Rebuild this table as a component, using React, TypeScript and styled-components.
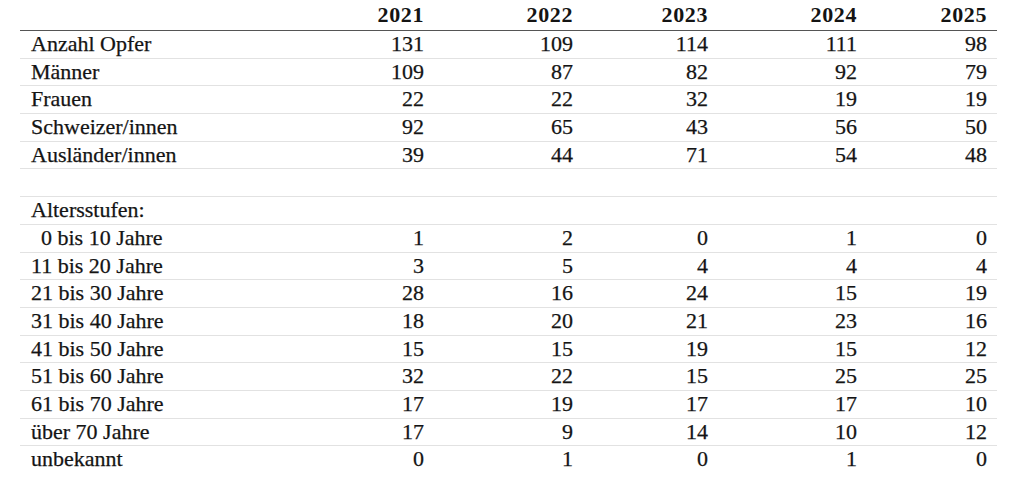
import React from "react";
import styled, { createGlobalStyle } from "styled-components";

const Global = createGlobalStyle`
  html, body { margin: 0; padding: 0; background: #fff; }
  body {
    font-family: "Liberation Serif", "Times New Roman", serif;
    color: #141414;
    -webkit-font-smoothing: antialiased;
  }
`;

const COLS = "265px 149px 149px 135px 149px 130px";

const Table = styled.div`
  margin-left: 20px;
  width: 977px;
  display: flex;
  flex-direction: column;
`;

const HeaderRow = styled.div`
  display: grid;
  grid-template-columns: ${COLS};
  height: 31px;
  box-sizing: border-box;
  border-bottom: 1.5px solid #555;
  align-items: end;
  font-weight: 700;
  font-size: 22px;
  line-height: 22px;
  letter-spacing: 0.6px;
  padding-bottom: 4px;
`;

const Row = styled.div<{ $last?: boolean }>`
  display: grid;
  grid-template-columns: ${COLS};
  height: 27.7px;
  box-sizing: border-box;
  border-bottom: ${(p) => (p.$last ? "none" : "1px solid #e2e2e2")};
  font-size: 22px;
  line-height: 26px;
  -webkit-text-stroke: 0.25px #141414;
`;

const Label = styled.div<{ $indent?: boolean }>`
  padding-left: ${(p) => (p.$indent ? "21px" : "11px")};
  white-space: nowrap;
`;

const Num = styled.div`
  text-align: right;
  padding-right: 10px;
`;

const years = ["2021", "2022", "2023", "2024", "2025"];

type R = { label: string; vals?: number[]; indent?: boolean };

const rows: R[] = [
  { label: "Anzahl Opfer", vals: [131, 109, 114, 111, 98] },
  { label: "Männer", vals: [109, 87, 82, 92, 79] },
  { label: "Frauen", vals: [22, 22, 32, 19, 19] },
  { label: "Schweizer/innen", vals: [92, 65, 43, 56, 50] },
  { label: "Ausländer/innen", vals: [39, 44, 71, 54, 48] },
  { label: "" },
  { label: "Altersstufen:" },
  { label: "0 bis 10 Jahre", vals: [1, 2, 0, 1, 0], indent: true },
  { label: "11 bis 20 Jahre", vals: [3, 5, 4, 4, 4] },
  { label: "21 bis 30 Jahre", vals: [28, 16, 24, 15, 19] },
  { label: "31 bis 40 Jahre", vals: [18, 20, 21, 23, 16] },
  { label: "41 bis 50 Jahre", vals: [15, 15, 19, 15, 12] },
  { label: "51 bis 60 Jahre", vals: [32, 22, 15, 25, 25] },
  { label: "61 bis 70 Jahre", vals: [17, 19, 17, 17, 10] },
  { label: "über 70 Jahre", vals: [17, 9, 14, 10, 12] },
  { label: "unbekannt", vals: [0, 1, 0, 1, 0] },
];

export default function App() {
  return (
    <>
      <Global />
      <Table>
        <HeaderRow>
          <Label />
          {years.map((y) => (
            <Num key={y}>{y}</Num>
          ))}
        </HeaderRow>
        {rows.map((r, i) => (
          <Row key={i} $last={i === rows.length - 1}>
            <Label $indent={r.indent}>{r.label}</Label>
            {(r.vals ?? [null, null, null, null, null]).map((v, j) => (
              <Num key={j}>{v ?? ""}</Num>
            ))}
          </Row>
        ))}
      </Table>
    </>
  );
}
